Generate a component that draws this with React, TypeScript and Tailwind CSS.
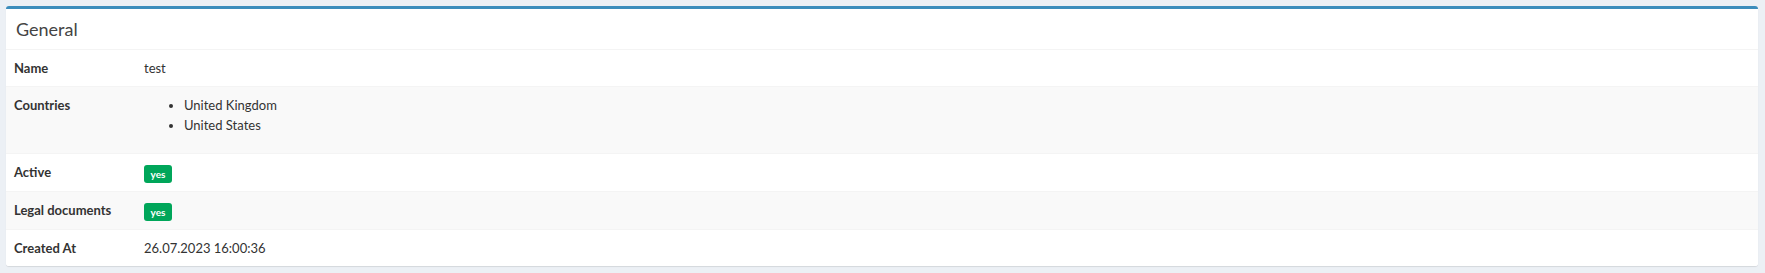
import React from "react";

const font = { fontFamily: "Lato, 'Noto Sans', sans-serif" };

function Row({ label, children, striped }: { label: string; children: React.ReactNode; striped?: boolean }) {
  return (
    <div className={`flex border-t border-[#f4f4f4] ${striped ? "bg-[#f9f9f9]" : "bg-white"}`}>
      <div className="w-[130px] shrink-0 px-[8px] py-[8px] font-bold text-[13px] leading-[20px] text-[#333]">{label}</div>
      <div className="flex-1 px-[8px] py-[8px] text-[13px] leading-[20px] text-[#333]">{children}</div>
    </div>
  );
}

function Badge() {
  return (
    <span className="inline-flex h-[18px] w-[28px] items-center justify-center rounded-[3px] bg-[#00a65a] text-[10px] font-bold leading-none text-white align-top mt-[3px]">
      yes
    </span>
  );
}

export default function App() {
  return (
    <div className="min-h-[273px] w-[1765px] bg-[#ecf0f5] pt-[6px] pl-[6px]" style={font}>
      <div className="w-[1752px] overflow-hidden rounded-[3px] border-t-[3px] border-[#3c8dbc] bg-white shadow-[0_1px_1px_rgba(0,0,0,0.1)]">
        <div className="flex h-[40px] items-center px-[10px] text-[18px] leading-none text-[#444]">General</div>
        <Row label="Name">test</Row>
        <Row label="Countries" striped>
          <ul className="mb-[10px] list-disc pl-[40px]">
            <li>United Kingdom</li>
            <li>United States</li>
          </ul>
        </Row>
        <Row label="Active">
          <Badge />
        </Row>
        <Row label="Legal documents" striped>
          <Badge />
        </Row>
        <Row label="Created At">26.07.2023 16:00:36</Row>
      </div>
    </div>
  );
}
